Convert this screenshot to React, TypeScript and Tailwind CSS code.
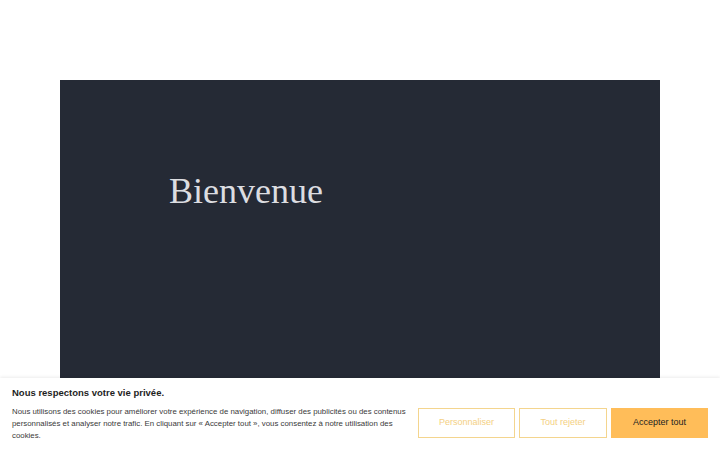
export default function App() {
  return (
    <div className="relative h-[450px] w-[720px] overflow-hidden bg-white">
      {/* contenu de la page */}
      <div className="pt-[80px] px-[60px]">
        <div className="h-[340px] bg-[#252a35] pl-[109px] pt-[93px]">
          <h1
            className="text-[36px] leading-none text-[#dcdde1]"
            style={{ fontFamily: '"Liberation Serif", serif' }}
          >
            Bienvenue
          </h1>
        </div>
      </div>

      {/* bandeau cookies */}
      <div
        className="absolute bottom-0 left-0 right-0 h-[72px] bg-white shadow-[0_-1px_3px_rgba(0,0,0,0.08)] flex items-start px-[12px] pt-[9px] gap-[12px]"
        style={{ fontFamily: '"Liberation Sans", Arial, sans-serif' }}
      >
        <div className="flex-1 flex flex-col">
          <div className="text-[9.5px] font-bold text-[#1e1e1e] leading-[12px]">
            Nous respectons votre vie privée.
          </div>
          <p className="mt-[7px] text-[7.85px] leading-[12px] text-[#3a3a3a]">
            Nous utilisons des cookies pour améliorer votre expérience de navigation, diffuser des publicités ou des contenus
            personnalisés et analyser notre trafic. En cliquant sur « Accepter tout », vous consentez à notre utilisation des
            cookies.
          </p>
        </div>
        <div className="flex gap-[4px] pt-[21px]">
          <button className="h-[30px] w-[97px] border border-[#f4d58e] text-[9px] text-[#f4d083]">
            Personnaliser
          </button>
          <button className="h-[30px] w-[88px] border border-[#f4d58e] text-[9px] text-[#f4d083]">
            Tout rejeter
          </button>
          <button className="h-[30px] w-[97px] bg-[#ffbd59] text-[9px] text-[#222]">
            Accepter tout
          </button>
        </div>
      </div>
    </div>
  );
}
